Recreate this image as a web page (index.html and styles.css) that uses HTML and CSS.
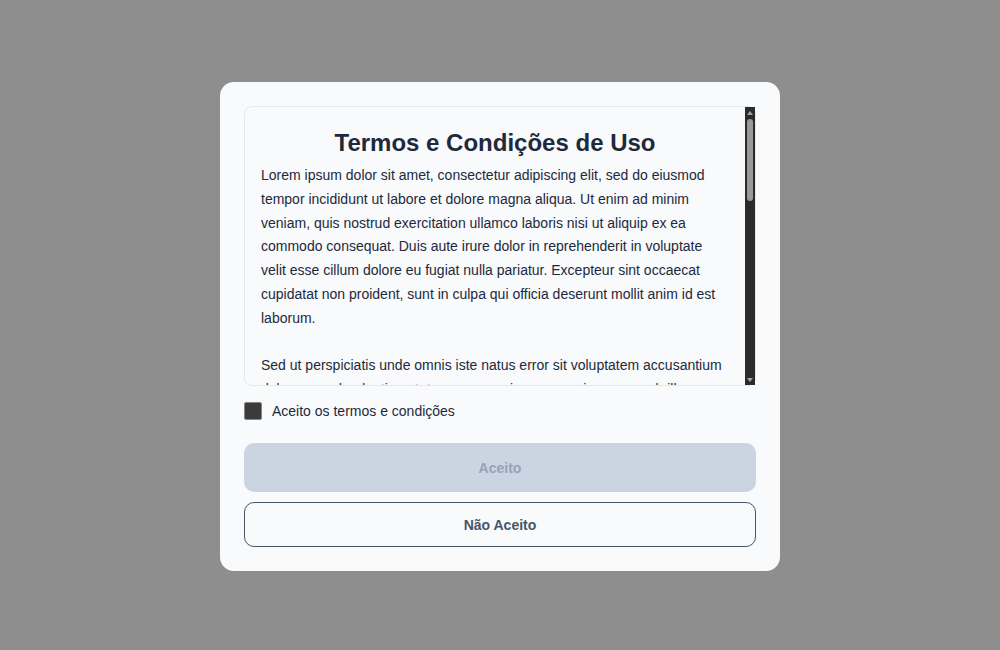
FILE: index.html
```html
<!DOCTYPE html>
<html lang="pt">
<head>
<meta charset="utf-8">
<title>Termos e Condições de Uso</title>
<link rel="stylesheet" href="styles.css">
</head>
<body>
<div class="overlay">
  <div class="modal">
    <div class="terms">
      <div class="terms-content">
        <h2 class="terms-title">Termos e Condições de Uso</h2>
        <p class="terms-text">Lorem ipsum dolor sit amet, consectetur adipiscing elit, sed do eiusmod tempor incididunt ut labore et dolore magna aliqua. Ut enim ad minim veniam, quis nostrud exercitation ullamco laboris nisi ut aliquip ex ea commodo consequat. Duis aute irure dolor in reprehenderit in voluptate velit esse cillum dolore eu fugiat nulla pariatur. Excepteur sint occaecat cupidatat non proident, sunt in culpa qui officia deserunt mollit anim id est laborum.</p>
        <p class="terms-text">Sed ut perspiciatis unde omnis iste natus error sit voluptatem accusantium doloremque laudantium, totam rem aperiam, eaque ipsa quae ab illo inventore veritatis et quasi architecto beatae vitae dicta sunt explicabo.</p>
      </div>
      <div class="scrollbar" aria-hidden="true">
        <span class="sb-arrow sb-up"></span>
        <span class="sb-thumb"></span>
        <span class="sb-space"></span>
        <span class="sb-arrow sb-down"></span>
      </div>
    </div>
    <label class="accept-row">
      <input type="checkbox" class="accept-check">
      <span>Aceito os termos e condições</span>
    </label>
    <button class="btn btn-accept" disabled>Aceito</button>
    <button class="btn btn-decline">Não Aceito</button>
  </div>
</div>
</body>
</html>
```

FILE: styles.css
```css
html, body {
  margin: 0;
  padding: 0;
  height: 100%;
}
body {
  background: #8e8e8e;
  font-family: "Liberation Sans", Arial, sans-serif;
}
.overlay {
  height: 100%;
  box-sizing: border-box;
  padding-top: 3px;
  display: flex;
  align-items: center;
  justify-content: center;
}
.modal {
  width: 560px;
  box-sizing: border-box;
  padding: 24px;
  background: #f8fafc;
  border-radius: 14px;
  display: flex;
  flex-direction: column;
}
.terms {
  height: 280px;
  box-sizing: border-box;
  border: 1px solid #e2e8f0;
  border-radius: 8px;
  display: flex;
}
.terms-content {
  flex: 1;
  min-width: 0;
  overflow: hidden;
  padding: 16px 16px 0 16px;
  border-radius: 8px 0 0 8px;
}
.scrollbar {
  width: 10px;
  flex: none;
  background: #2b2b2b;
  display: flex;
  flex-direction: column;
  align-items: center;
  padding: 4px 0 3px;
  box-sizing: border-box;
}
.sb-arrow {
  width: 0;
  height: 0;
  border-left: 3.5px solid transparent;
  border-right: 3.5px solid transparent;
}
.sb-up {
  border-bottom: 4px solid #a3a3a3;
}
.sb-down {
  border-top: 4px solid #a3a3a3;
}
.sb-thumb {
  width: 6px;
  height: 82px;
  margin-top: 4px;
  background: #9a9a9a;
  border-radius: 3px;
}
.sb-space {
  flex: 1;
}
.terms-title {
  margin: 6px 0 8px;
  text-align: center;
  font-size: 24px;
  line-height: 27px;
  font-weight: 700;
  color: #1e293b;
}
.terms-text {
  margin: 0 0 23.8px;
  font-size: 14px;
  line-height: 1.7;
  color: #1e293b;
}
.accept-row {
  display: flex;
  align-items: center;
  gap: 10px;
  margin-top: 16px;
  font-size: 14px;
  color: #1e293b;
  color-scheme: dark;
}
.accept-row span {
  color: #1e293b;
}
.accept-check {
  width: 18px;
  height: 18px;
  margin: 0;
}
.btn {
  display: block;
  width: 100%;
  font-family: "Liberation Sans", Arial, sans-serif;
  font-size: 14px;
  font-weight: 700;
  border-radius: 10px;
}
.btn-accept {
  margin-top: 23px;
  height: 49px;
  border: none;
  background: #cbd5e1;
  color: #94a3b8;
}
.btn-decline {
  margin-top: 10px;
  height: 45px;
  border: 1px solid #475569;
  background: #f8fafc;
  color: #475569;
}
```
